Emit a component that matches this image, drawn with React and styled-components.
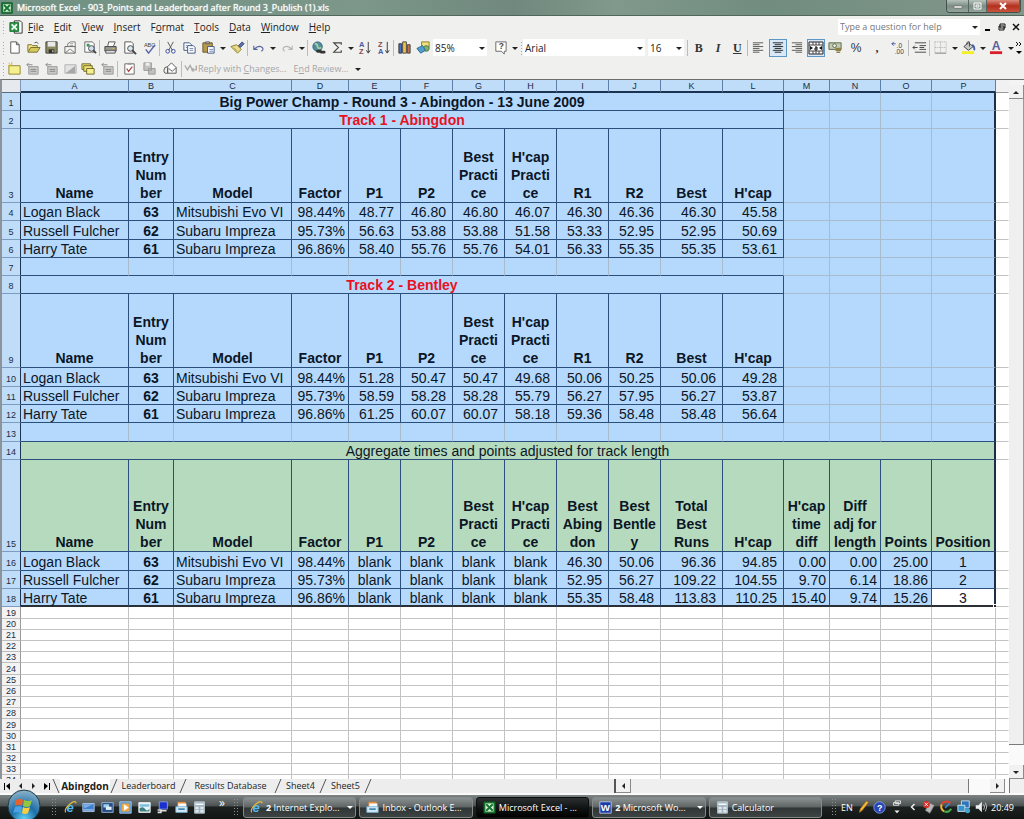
import styled, { createGlobalStyle, css } from "styled-components";

const UI_FONT = "'Open Sans', 'Noto Sans', sans-serif";
const CELL_FONT = "'Liberation Sans', Arial, sans-serif";

const BLUE = "#b5d9fd";
const GREEN = "#b6dabd";
const LINE = "#2b4f7c";
const SOFT = "#a9bccf";
const GRID = "#c3c3c3";

const columns = [
    { letter: "A", width: 108, align: "left" },
    { letter: "B", width: 45, align: "center" },
    { letter: "C", width: 118, align: "left" },
    { letter: "D", width: 57, align: "right", pad: 3 },
    { letter: "E", width: 52, align: "right", pad: 6 },
    { letter: "F", width: 52, align: "right", pad: 6 },
    { letter: "G", width: 52, align: "right", pad: 6 },
    { letter: "H", width: 52, align: "right", pad: 6 },
    { letter: "I", width: 52, align: "right", pad: 6 },
    { letter: "J", width: 52, align: "right", pad: 6 },
    { letter: "K", width: 62, align: "right", pad: 6 },
    { letter: "L", width: 61, align: "right", pad: 6 },
    { letter: "M", width: 46, align: "right", pad: 3 },
    { letter: "N", width: 51, align: "right", pad: 3 },
    { letter: "O", width: 51, align: "right", pad: 3 },
    { letter: "P", width: 64, align: "center" },
];

const trackHead = ["Name", "Entry\nNum\nber", "Model", "Factor", "P1", "P2", "Best\nPracti\nce", "H'cap\nPracti\nce", "R1", "R2", "Best", "H'cap"];
const totalHead = ["Name", "Entry\nNum\nber", "Model", "Factor", "P1", "P2", "Best\nPracti\nce", "H'cap\nPracti\nce", "Best\nAbing\ndon", "Best\nBentle\ny", "Total\nBest\nRuns", "H'cap", "H'cap\ntime\ndiff", "Diff\nadj for\nlength", "Points", "Position"];

const rows = [
    { type: "banner", height: 18, text: "Big Power Champ - Round 3 - Abingdon - 13 June 2009", bold: true },
    { type: "banner", height: 18, text: "Track 1 - Abingdon", bold: true, color: "#e8121f" },
    { type: "head", height: 74, cells: trackHead },
    { type: "data", height: 18, cells: ["Logan Black", "63", "Mitsubishi Evo VI", "98.44%", "48.77", "46.80", "46.80", "46.07", "46.30", "46.36", "46.30", "45.58"] },
    { type: "data", height: 19, cells: ["Russell Fulcher", "62", "Subaru Impreza", "95.73%", "56.63", "53.88", "53.88", "51.58", "53.33", "52.95", "52.95", "50.69"] },
    { type: "data", height: 18, cells: ["Harry Tate", "61", "Subaru Impreza", "96.86%", "58.40", "55.76", "55.76", "54.01", "56.33", "55.35", "55.35", "53.61"] },
    { type: "gap", height: 18, lineTo: 12 },
    { type: "banner", height: 18, text: "Track 2 - Bentley", bold: true, color: "#e8121f" },
    { type: "head", height: 74, cells: trackHead },
    { type: "data", height: 19, cells: ["Logan Black", "63", "Mitsubishi Evo VI", "98.44%", "51.28", "50.47", "50.47", "49.68", "50.06", "50.25", "50.06", "49.28"] },
    { type: "data", height: 18, cells: ["Russell Fulcher", "62", "Subaru Impreza", "95.73%", "58.59", "58.28", "58.28", "55.79", "56.27", "57.95", "56.27", "53.87"] },
    { type: "data", height: 18, cells: ["Harry Tate", "61", "Subaru Impreza", "96.86%", "61.25", "60.07", "60.07", "58.18", "59.36", "58.48", "58.48", "56.64"] },
    { type: "gap", height: 19, lineTo: 16 },
    { type: "banner", height: 18, text: "Aggregate times and points adjusted for track length", span: 16, green: true },
    { type: "head", height: 92, cells: totalHead, green: true },
    { type: "data", height: 19, cells: ["Logan Black", "63", "Mitsubishi Evo VI", "98.44%", "blank", "blank", "blank", "blank", "46.30", "50.06", "96.36", "94.85", "0.00", "0.00", "25.00", "1"] },
    { type: "data", height: 18, cells: ["Russell Fulcher", "62", "Subaru Impreza", "95.73%", "blank", "blank", "blank", "blank", "52.95", "56.27", "109.22", "104.55", "9.70", "6.14", "18.86", "2"] },
    { type: "data", height: 18, last: true, cells: ["Harry Tate", "61", "Subaru Impreza", "96.86%", "blank", "blank", "blank", "blank", "55.35", "58.48", "113.83", "110.25", "15.40", "9.74", "15.26", "3"] },
];

const emptyRows = [12, 11, 11, 11, 11, 12, 11, 11, 11, 11, 12, 11, 11, 11, 11, 11];

/* ---------- icons ---------- */

const drawings = {
    blank: <path d="M4 2h6l3 3v9H4z M10 2v3h3" fill="#fff" stroke="#555" />,
    open: <><path d="M2 12V5h4l1 1h5v2" fill="#f4e48a" stroke="#77702a" /><path d="M2 13l3-5h10l-3 5z" fill="#d8c860" stroke="#77702a" /><path d="M9 3q3-2 4 1" fill="none" stroke="#555" /></>,
    save: <><path d="M2 2h12v12H2z" fill="#8a8a5c" stroke="#444" /><path d="M4 2h8v5H4z" fill="#e9e9e9" /><path d="M5 10h6v4H5z" fill="#333" /><path d="M9 11h1v2H9z" fill="#fff" /></>,
    mail: <><path d="M5 7V4l3-2h5v6" fill="#fff" stroke="#777" /><path d="M7 4h4M7 6h4" stroke="#999" /><path d="M2 7h11v7H2z" fill="#f3f3f3" stroke="#666" /><path d="M2 14l5-4h1l5 4" fill="none" stroke="#777" /></>,
    find: <><path d="M3 2h8l2 2v9H3z" fill="#fff" stroke="#666" /><path d="M5 4h3v3H5z" fill="#3b8f50" /><circle cx="10" cy="9" r="3" fill="#cfe2f3" stroke="#444" /><path d="M12 11l3 3" stroke="#444" strokeWidth="2" /></>,
    print: <><path d="M5 7l1-5h7l-2 5" fill="#fff" stroke="#555" /><path d="M2 7h12v5H2z" fill="#9b9b90" stroke="#444" /><path d="M3 11h10v3H3z" fill="#ddd" stroke="#555" /><path d="M10 9h2" stroke="#d7c12d" /></>,
    preview: <><path d="M3 2h7l2 2v10H3z" fill="#fff" stroke="#555" /><circle cx="9" cy="9" r="3" fill="#d7e7f2" stroke="#444" /><path d="M11 11l4 4" stroke="#444" strokeWidth="2" /></>,
    spell: <><text x="2" y="7" fontSize="6" fontFamily="Liberation Sans" fill="#444">ABC</text><path d="M4 10l3 4 7-9" fill="none" stroke="#5b68a8" strokeWidth="1.6" /></>,
    cut: <><path d="M5 2l5 9M11 2L6 11" stroke="#555" fill="none" /><circle cx="5" cy="12" r="2" fill="none" stroke="#3a4fa3" /><circle cx="11" cy="12" r="2" fill="none" stroke="#3a4fa3" /></>,
    copy: <><path d="M2 3h6l2 2v6H2z" fill="#fff" stroke="#3f5585" /><path d="M6 6h6l2 2v6H6z" fill="#fff" stroke="#3f5585" /><path d="M8 9h4M8 11h4M4 6h2M4 8h2" stroke="#7183ad" /></>,
    paste: <><path d="M2 3h10v10H2z" fill="#b89a4f" stroke="#665526" /><path d="M5 2h4v2H5z" fill="#ccc" stroke="#555" /><path d="M7 7h7v7H7z" fill="#fff" stroke="#3f5585" /><path d="M9 10h4M9 12h4" stroke="#7183ad" /></>,
    brush: <><path d="M9 6l4-4 2 2-4 4z" fill="#5d6fae" stroke="#3d4775" /><path d="M1 7l6-2 5 5-4 4z" fill="#e9dc8c" stroke="#8b7a23" /><path d="M4 8l4 4" stroke="#a99a45" /></>,
    undo: <path d="M3 6v4h4M3 10q5-5 9-2 2 2-1 4" fill="none" stroke="#5a659c" strokeWidth="1.2" />,
    redo: <path d="M13 6v4H9M13 10Q8 5 4 8q-2 2 1 4" fill="none" stroke="#b5b5b5" strokeWidth="1.2" />,
    globe: <><circle cx="7" cy="7" r="5" fill="#4d8da0" stroke="#335c77" /><path d="M4 4q3 0 3 3t4 1" fill="none" stroke="#9ecf9c" strokeWidth="2" /><path d="M7 12h3M11 13h3" stroke="#333" strokeWidth="3" strokeLinecap="round" /></>,
    sum: <path d="M12 5V3H4l5 5-5 5h8v-2" fill="none" stroke="#444" strokeWidth="1.2" />,
    sortAz: <><text x="2" y="7" fontSize="8" fontWeight="bold" fontFamily="Liberation Sans" fill="#4a58a8">A</text><text x="2" y="15" fontSize="8" fontWeight="bold" fontFamily="Liberation Sans" fill="#8a4a4a">Z</text><path d="M12 2v11M10 11l2 3 2-3" fill="none" stroke="#333" /></>,
    sortZa: <><text x="2" y="7" fontSize="8" fontWeight="bold" fontFamily="Liberation Sans" fill="#8a4a4a">Z</text><text x="2" y="15" fontSize="8" fontWeight="bold" fontFamily="Liberation Sans" fill="#4a58a8">A</text><path d="M12 2v11M10 11l2 3 2-3" fill="none" stroke="#333" /></>,
    chart: <><path d="M2 4h3v10H2z" fill="#4b6fc0" stroke="#333" /><path d="M6 2h4v12H6z" fill="#efc04a" stroke="#444" /><path d="M11 5h3v9h-3z" fill="#c2704f" stroke="#444" /></>,
    draw: <><path d="M6 2h8v6H6z" fill="#f0e27a" stroke="#8a7726" /><circle cx="11" cy="9" r="3" fill="#7fb06d" stroke="#4e7a45" /><path d="M1 9l6-3 3 5-5 3z" fill="#4e9fd0" stroke="#2d678e" /></>,
    help: <><path d="M3 2h11v10h-2v3l-3-3H3z" fill="#fff" stroke="#666" /><text x="6" y="10" fontSize="9" fontWeight="bold" fontFamily="Liberation Sans" fill="#444">?</text></>,
    left: <path d="M2 3h11M2 5h7M2 7h11M2 9h7M2 11h11M2 13h7" stroke="#555" />,
    center: <path d="M3 3h11M5 5h7M3 7h11M5 9h7M3 11h11M5 13h7" stroke="#222" />,
    right: <path d="M3 3h11M7 5h7M3 7h11M7 9h7M3 11h11M7 13h7" stroke="#555" />,
    merge: <><path d="M1 2h14v12H1z" fill="#fff" stroke="#222" /><path d="M1 5h14M1 11h14M5 2v3M8 2v3M11 2v3M5 11v3M8 11v3M11 11v3" stroke="#444" fill="none" /><path d="M2 6v4l3-2zM14 6v4l-3-2z" fill="#111" /><path d="M7 7h2v3H7V8h2" fill="none" stroke="#111" /></>,
    money: <><path d="M1 3h13v7H1z" fill="#c3cbb3" stroke="#5a6847" /><circle cx="7" cy="6" r="2" fill="#eee" stroke="#5a6847" /><path d="M8 9h6M8 11h6M9 13h4" stroke="#8f8248" strokeWidth="1.6" /></>,
    decimal: <><text x="7" y="8" fontSize="7" fontFamily="Liberation Sans" fill="#444">.0</text><text x="5" y="15" fontSize="7" fontFamily="Liberation Sans" fill="#444">.00</text><path d="M2 4h4M4 2L2 4l2 2" fill="none" stroke="#4253a0" /></>,
    indent: <path d="M3 3h12M8 6h7M8 8h5M8 10h7M3 13h12M6 8H1M3 6L1 8l2 2" fill="none" stroke="#444" />,
    borders: <><path d="M2 2h12M2 8h12M2 2v11M8 2v11M14 2v11" stroke="#aaa" strokeDasharray="1 1" fill="none" /><path d="M2 14h12" stroke="#777" /></>,
    fill: <><path d="M3 7l5-4 5 4-5 4z" fill="#c8c8c8" stroke="#444" /><path d="M6 5q0-4 3-3v5" fill="none" stroke="#444" /><path d="M12 5q3 2 2 6" fill="none" stroke="#3f5fa9" strokeWidth="2" /><path d="M1 12h13v3H1z" fill="#f2ef22" /></>,
    fontColor: <><text x="3" y="11" fontSize="13" fontWeight="bold" fontFamily="Liberation Sans" fill="#5a5f9a">A</text><path d="M1 12h13v3H1z" fill="#d9202a" /></>,
    note: <><path d="M2 5h12v9H2z" fill="#f6ef8e" stroke="#8f8734" /><path d="M2 2l2 3M5 1v3M1 5h3" stroke="#dbb52a" /></>,
    noteOff: <><path d="M4 6h10v8H4z" fill="#c9c9c9" stroke="#999" /><path d="M8 4H2M4 2L2 4l2 2M6 9h6M6 11h6" fill="none" stroke="#888" /></>,
    slope: <><path d="M2 4h12v9H2z" fill="#e2e2e2" stroke="#b2b2b2" /><path d="M3 13L13 5v8z" fill="#a8a8a8" /></>,
    notes: <><path d="M1 3h9v6H1z" fill="#efe56e" stroke="#6e682c" /><path d="M3 5h9v6H3z" fill="#efe56e" stroke="#6e682c" /><path d="M6 8h8v6H6z" fill="#f6ef8e" stroke="#6e682c" /></>,
    task: <><path d="M3 3h10v11H3z" fill="#fff" stroke="#666" /><path d="M6 2h4v2H6z" fill="#999" /><path d="M5 8l2 3 4-5" fill="none" stroke="#a94f44" strokeWidth="1.4" /></>,
    saveOff: <><path d="M2 2h8v8H2zM7 8h7v6H7z" fill="#c2c2c2" stroke="#999" /><path d="M4 2h4v3H4z" fill="#eee" /></>,
    attach: <><path d="M5 6l4-4 5 5v6H5z" fill="#fff" stroke="#555" /><path d="M6 8l4 3 4-4M5 6q-4 0-4 4t4 3V8" fill="none" stroke="#555" /></>,
    reply: <path d="M1 4l3 5 3-5 2 4M14 4v5H9M11 7L9 9l2 2" fill="none" stroke="#aaa" strokeWidth="1.6" />,
    excel: <><path d="M1 1h14v14H1z" fill="#1f7d35" stroke="#0e4d1d" /><path d="M3 3h10v10H3z" fill="#d9f0dc" /><path d="M4 4l8 8M12 4l-8 8" stroke="#167531" strokeWidth="2.4" /></>,
    book: <><path d="M6 1h7l2 2v12H6z" fill="#fff" stroke="#222" /><path d="M1 3h10v10H1z" fill="#2f9b48" stroke="#14662a" /><path d="M3 5l6 6M9 5l-6 6" stroke="#fff" strokeWidth="1.8" /></>,
    ie: <><text x="3" y="13" fontSize="16" fontWeight="bold" fontStyle="italic" fontFamily="Liberation Sans" fill="#55b8ef">e</text><path d="M2 14Q0 10 7 4t8-1" fill="none" stroke="#e5bc3b" strokeWidth="1.4" /></>,
    desktop: <><path d="M1 3h14v10H1z" fill="#3f7fd0" stroke="#bcd4f0" /><path d="M2 4h12L3 9z" fill="#7db0ea" /><path d="M2 11h12" stroke="#e0e9f2" /></>,
    windows: <><path d="M1 2h14v12H1z" fill="#264c83" stroke="#a6bfe0" /><path d="M3 4h7v4H3z" fill="#9fd1ef" /><path d="M6 7h7v4H6z" fill="#e0effa" /></>,
    player: <><path d="M1 1h14v14H1z" fill="#4c93d5" stroke="#b9d8f2" /><path d="M3 3h10v10H3z" fill="#f0a63c" /><path d="M6 4l6 4-6 4z" fill="#fff" /></>,
    photo: <><path d="M1 2h14v12H1z" fill="#e4f2f8" stroke="#fff" /><path d="M2 4h12v3H2z" fill="#7cbde0" /><path d="M2 9q4-3 7 1t5-1v4H2z" fill="#3d7e7e" /></>,
    monitor: <><path d="M4 1h10v9H4z" fill="#1a2fd0" stroke="#93a9e4" /><path d="M7 12h6M2 11h4v3H2" stroke="#ddd" strokeWidth="2" fill="none" /></>,
    outlook: <><path d="M3 1h10v8H3z" fill="#e98c3b" /><path d="M4 3h10v6H4z" fill="#f9f9f9" /><path d="M1 7h14v7H1z" fill="#d2e8f5" stroke="#76b3d8" /><path d="M4 10h8" stroke="#367fae" strokeWidth="2" /></>,
    calc: <><path d="M2 1h12v14H2z" fill="#9fb2be" stroke="#c9d8e0" /><path d="M3 3h10v2H3z" fill="#f5fbff" /><path d="M3 7h4v3H3zM9 7h4v3H9zM3 11h4v3H3zM9 11h4v3H9z" fill="#dde6eb" /></>,
    word: <><path d="M1 1h14v14H1z" fill="#1c3ba4" stroke="#c5d1f2" /><text x="2" y="12" fontSize="12" fontWeight="bold" fontFamily="Liberation Sans" fill="#fff">W</text></>,
    pencil: <path d="M4 14l1-4 7-9 2 2-7 9z" fill="#f4c03c" stroke="#a9721b" />,
    about: <><circle cx="8" cy="8" r="7" fill="#2646b5" stroke="#8ea4ea" /><text x="5" y="12" fontSize="11" fontWeight="bold" fontFamily="Liberation Sans" fill="#fff">?</text></>,
    restore: <><path d="M6 1h6v3H6zM4 3h6v3H4z" fill="none" stroke="#eee" /><path d="M5 12h6l-3 3z" fill="#eee" /></>,
    usb: <><path d="M8 3l6 3-5 9-5-3z" fill="#b9b9b9" stroke="#777" /><circle cx="5" cy="5" r="4" fill="#d92d27" /><path d="M3 3l4 4M7 3L3 7" stroke="#fff" /></>,
    ring: <><path d="M13 4A6 6 0 0 0 3 5" fill="none" stroke="#d84430" strokeWidth="2.4" /><path d="M3 5a6 6 0 0 0 3 8" fill="none" stroke="#eeb62c" strokeWidth="2.4" /><path d="M6 13q5 2 8-3" fill="none" stroke="#44a845" strokeWidth="2.4" /><path d="M12 4L7 9" stroke="#3f83cf" strokeWidth="2" /></>,
    network: <><path d="M5 1h9v8H5z" fill="#2d75b8" stroke="#cfe6f7" /><path d="M1 6h8v7H1z" fill="#3791cb" stroke="#dbeefa" /><circle cx="12" cy="12" r="3" fill="#44a6cf" /></>,
    sound: <><path d="M2 6h3l4-4v12l-4-4H2z" fill="#eee" /><path d="M11 5q2 3 0 6M13 3q3 5 0 10" fill="none" stroke="#ccc" /></>,
    hide: <path d="M10 4L6 8l4 4" fill="none" stroke="#eee" strokeWidth="2" />,
};

function Icon({ name, size = 15 }) {
    return (
        <svg width={size} height={size} viewBox="0 0 16 16" aria-hidden="true">{drawings[name]}</svg>
    );
}

function Arrow({ dir = "down", color = "#222" }) {
    const paths = { down: "M0 2h6L3 5z", up: "M0 5h6L3 2z", left: "M5 0v6L2 3z", right: "M2 0v6l3-3z" };
    return (
        <svg width="6" height="6" viewBox="0 0 6 6" aria-hidden="true"><path d={paths[dir]} fill={color} /></svg>
    );
}

function Tools({ width, items }) {
    return (
        <Group $width={width}>
            {items.map((item, i) => (
                item === "v"
                    ? <Drop key={i} aria-label="More"><Arrow /></Drop>
                    : <Tool key={i} aria-label={item}><Icon name={item} /></Tool>
            ))}
        </Group>
    );
}

function Combo({ label, width, value }) {
    return (
        <ComboBox $width={width}>
            <ComboSelect aria-label={label} defaultValue={value}>
                <option>{value}</option>
            </ComboSelect>
            <Arrow />
        </ComboBox>
    );
}

function MenuName({ name, at = 0 }) {
    return (
        <MenuItem>{name.slice(0, at)}<u>{name[at]}</u>{name.slice(at + 1)}</MenuItem>
    );
}

function SheetRow({ row, number }) {
    const tone = row.green ? GREEN : BLUE;
    const rest = row.type === "banner" ? columns.slice(row.span || 12) : columns.slice((row.cells || []).length);
    return (
        <tr>
            <RowHead scope="row" $height={row.height} $selected>{number}</RowHead>
            {row.type === "banner" && (
                <Cell colSpan={row.span || 12} $bg={tone} $align="center" $bold={row.bold} $color={row.color} $edge={row.span === 16}>{row.text}</Cell>
            )}
            {row.type === "head" && row.cells.map((text, i) => (
                <Cell key={i} as="th" scope="col" $bg={tone} $align="center" $bold $edge={i === 15}>{text}</Cell>
            ))}
            {row.type === "data" && row.cells.map((text, i) => (
                <Cell
                    key={i}
                    $bg={row.last && i === 15 ? "#fff" : tone}
                    $align={text === "blank" ? "center" : columns[i].align}
                    $pad={text === "blank" ? 0 : columns[i].pad}
                    $bold={i === 1}
                    $edge={i === 15}
                    $last={row.last}
                >
                    {text}
                    {row.last && i === 15 && <Handle />}
                </Cell>
            ))}
            {row.type === "gap" && columns.map((col, i) => (
                <Cell key={col.letter} $bg={tone} $right={SOFT} $bottom={i < row.lineTo ? LINE : SOFT} $edge={i === 15} />
            ))}
            {row.type !== "gap" && rest.map((col) => (
                <Cell key={col.letter} $bg={tone} $right={SOFT} $bottom={SOFT} $edge={col.letter === "P"} />
            ))}
            <Cell $bg="#fff" $right="#fff" $bottom={GRID} />
        </tr>
    );
}

function Task({ icon, children, active, menu }) {
    return (
        <TaskButton $active={active}>
            <Icon name={icon} size={13} />
            <span>{children}</span>
            {menu && <Arrow color="#fff" />}
        </TaskButton>
    );
}

export default function App() {
    return (
        <Window>
            <GlobalStyle />
            <TitleBar>
                <Icon name="excel" size={12} />
                <Title>Microsoft Excel - 903_Points and Leaderboard after Round 3_Publish (1).xls</Title>
                <Caption>
                    <CaptionButton aria-label="Minimize" $width={22}><svg width="10" height="8"><path d="M1 4h8v2H1z" fill="#fff" stroke="#555" strokeWidth=".5" /></svg></CaptionButton>
                    <CaptionButton aria-label="Restore" $width={18}><svg width="10" height="8"><path d="M1 1h7v6H1zM3 3h3v2H3z" fill="none" stroke="#fff" /></svg></CaptionButton>
                    <CaptionButton aria-label="Close" $width={33} $close><svg width="10" height="8"><path d="M2 1l6 6M8 1L2 7" stroke="#fff" strokeWidth="2" /></svg></CaptionButton>
                </Caption>
            </TitleBar>

            <MenuBar>
                <Grip />
                <Icon name="book" size={14} />
                <MenuList>
                    <MenuName name="File" />
                    <MenuName name="Edit" />
                    <MenuName name="View" />
                    <MenuName name="Insert" />
                    <MenuName name="Format" at={1} />
                    <MenuName name="Tools" />
                    <MenuName name="Data" />
                    <MenuName name="Window" />
                    <MenuName name="Help" />
                </MenuList>
                <Ask>
                    <AskInput aria-label="Type a question for help" placeholder="Type a question for help" />
                    <Arrow />
                </Ask>
                <BookButtons>
                    <Drop aria-label="Minimize workbook"><svg width="8" height="8"><path d="M1 6h5v2H1z" /></svg></Drop>
                    <Drop aria-label="Restore workbook"><svg width="8" height="8"><path d="M2 1h5v4H2zM1 3h5v4H1z" fill="#eee" stroke="#111" /></svg></Drop>
                    <Drop aria-label="Close workbook"><svg width="8" height="8"><path d="M1 1l6 6M7 1L1 7" stroke="#111" strokeWidth="1.5" /></svg></Drop>
                </BookButtons>
            </MenuBar>

            <ToolBar>
                <Grip />
                <Tools width={94} items={["blank", "open", "save", "mail", "find"]} />
                <Rule />
                <Tools width={58} items={["print", "preview", "spell"]} />
                <Rule />
                <Tools width={86} items={["cut", "copy", "paste", "v", "brush"]} />
                <Rule />
                <Tools width={58} items={["undo", "v", "redo", "v"]} />
                <Rule />
                <Tools width={84} items={["globe", "sum", "v", "sortAz", "sortZa"]} />
                <Rule />
                <Tools width={38} items={["chart", "draw"]} />
                <Combo label="Zoom" width={54} value="85%" />
                <Tools width={30} items={["help", "v"]} />
                <Grip />
                <Combo label="Font" width={122} value="Arial" />
                <Combo label="Font size" width={36} value="16" />
                <Rule />
                <Group $width={58}>
                    <Letter aria-label="Bold"><b>B</b></Letter>
                    <Letter aria-label="Italic"><b><i>I</i></b></Letter>
                    <Letter aria-label="Underline"><b><u>U</u></b></Letter>
                </Group>
                <Rule />
                <Group $width={76}>
                    <Tool aria-label="Align left"><Icon name="left" /></Tool>
                    <Tool aria-label="Center" $on><Icon name="center" /></Tool>
                    <Tool aria-label="Align right"><Icon name="right" /></Tool>
                    <Tool aria-label="Merge and center" $on><Icon name="merge" size={16} /></Tool>
                </Group>
                <Group $width={83}>
                    <Tool aria-label="Currency"><Icon name="money" /></Tool>
                    <Letter aria-label="Percent" $sans>%</Letter>
                    <Letter aria-label="Comma style"><b>,</b></Letter>
                    <Tool aria-label="Increase decimal"><Icon name="decimal" /></Tool>
                </Group>
                <Rule />
                <Tools width={19} items={["indent"]} />
                <Rule />
                <Tools width={84} items={["borders", "v", "fill", "v", "fontColor", "v"]} />
                <Drop aria-label="Toolbar options">
                    <svg width="8" height="14"><path d="M1 1l2 2-2 2M4 1l2 2-2 2" fill="none" stroke="#111" /><path d="M1 10h6l-3 3z" /></svg>
                </Drop>
            </ToolBar>

            <ToolBar>
                <Grip />
                <Tools width={112} items={["note", "noteOff", "noteOff", "slope", "notes", "noteOff"]} />
                <Rule />
                <Tools width={62} items={["task", "saveOff", "attach"]} />
                <Rule />
                <Review disabled><Icon name="reply" size={14} />Reply with <u>C</u>hanges...</Review>
                <Review disabled>E<u>n</u>d Review...</Review>
                <Drop aria-label="Reviewing options"><Arrow /></Drop>
            </ToolBar>

            <Workbook>
                <SheetArea>
                    <Sheet>
                        <colgroup>
                            <Col $width={21} />
                            {columns.map((col) => <Col key={col.letter} $width={col.width} />)}
                            <col />
                        </colgroup>
                        <thead>
                            <tr>
                                <Corner aria-label="Select all" />
                                {columns.map((col) => <ColHead key={col.letter} scope="col">{col.letter}</ColHead>)}
                                <ColHead $plain aria-label="Q" />
                            </tr>
                        </thead>
                        <tbody>
                            {rows.map((row, i) => <SheetRow key={i} row={row} number={i + 1} />)}
                            {emptyRows.map((height, i) => (
                                <tr key={i}>
                                    <RowHead scope="row" $height={height}>{i + 19}</RowHead>
                                    {columns.map((col) => <Empty key={col.letter} />)}
                                    <Empty $open />
                                </tr>
                            ))}
                        </tbody>
                    </Sheet>
                </SheetArea>
                <VScroll>
                    <ScrollButton aria-label="Scroll up"><Arrow dir="up" /></ScrollButton>
                    <VThumb />
                    <VTrack />
                    <ScrollButton aria-label="Scroll down"><Arrow /></ScrollButton>
                </VScroll>
            </Workbook>

            <TabBar>
                <TabNav>
                    <Drop aria-label="First sheet"><svg width="7" height="7"><path d="M0 0h1v7H0zM6 0v7L2 3z" /></svg></Drop>
                    <Drop aria-label="Previous sheet"><Arrow dir="left" /></Drop>
                    <Drop aria-label="Next sheet"><Arrow dir="right" /></Drop>
                    <Drop aria-label="Last sheet"><svg width="7" height="7"><path d="M6 0h1v7H6zM1 0v7l4-4z" /></svg></Drop>
                </TabNav>
                <Slash viewBox="0 0 8 14"><path d="M1 0l6 14" /></Slash>
                <SheetTab $active $width={50}>Abingdon</SheetTab>
                <Slash viewBox="0 0 8 14"><path d="M7 0L1 14" /></Slash>
                <SheetTab $width={61}>Leaderboard</SheetTab>
                <Slash viewBox="0 0 8 14"><path d="M7 0L1 14" /></Slash>
                <SheetTab $width={87}>Results Database</SheetTab>
                <Slash viewBox="0 0 8 14"><path d="M7 0L1 14" /></Slash>
                <SheetTab $width={37}>Sheet4</SheetTab>
                <Slash viewBox="0 0 8 14"><path d="M7 0L1 14" /></Slash>
                <SheetTab $width={37}>Sheet5</SheetTab>
                <Slash viewBox="0 0 8 14"><path d="M7 0L1 14" /></Slash>
                <HScroll>
                    <ScrollButton aria-label="Scroll left"><Arrow dir="left" /></ScrollButton>
                    <HThumb />
                    <HTrack />
                    <ScrollButton aria-label="Scroll right"><Arrow dir="right" /></ScrollButton>
                    <SplitBox />
                </HScroll>
            </TabBar>

            <TaskBar>
                <Start aria-label="Start">
                    <svg width="36" height="30" viewBox="0 0 36 30">
                        <defs>
                            <radialGradient id="orb" cx=".5" cy=".9" r=".9">
                                <stop offset="0" stopColor="#5fd0f5" />
                                <stop offset=".45" stopColor="#1d6ea8" />
                                <stop offset="1" stopColor="#8fb4c9" />
                            </radialGradient>
                        </defs>
                        <circle cx="18" cy="17" r="16" fill="url(#orb)" stroke="#1f3947" />
                        <path d="M10 11q4-2 7 0l-1 6q-4-2-7 0z" fill="#e8602d" />
                        <path d="M18 11q4 2 8 0l-2 6q-3 2-7 0z" fill="#93c83e" />
                        <path d="M9 18q4-2 7 0l-1 6q-4-2-8 0z" fill="#4aa3e4" />
                        <path d="M17 18q3 2 7 0l-2 6q-3 2-6 0z" fill="#fbcf3c" />
                    </svg>
                </Start>
                <Grip $dark />
                <Quick>
                    {["ie", "desktop", "windows", "player", "photo", "monitor", "outlook", "calc"].map((name) => (
                        <Tool key={name} aria-label={name}><Icon name={name} size={13} /></Tool>
                    ))}
                </Quick>
                <Chevron aria-label="More shortcuts">»</Chevron>
                <Grip $dark />
                <TaskList>
                    <Task icon="ie" menu><b>2</b> Internet Explo...</Task>
                    <Task icon="outlook">Inbox - Outlook E...</Task>
                    <Task icon="excel" active>Microsoft Excel - ...</Task>
                    <Task icon="word" menu><b>2</b> Microsoft Wo...</Task>
                    <Task icon="calc">Calculator</Task>
                </TaskList>
                <Grip $dark />
                <Tray>
                    <span>EN</span>
                    <Icon name="pencil" size={14} />
                    <Icon name="about" size={13} />
                    <Icon name="restore" size={14} />
                    <Icon name="hide" size={12} />
                    <Icon name="usb" size={14} />
                    <Icon name="ring" size={14} />
                    <Icon name="network" size={14} />
                    <Icon name="sound" size={14} />
                    <span>20:49</span>
                </Tray>
            </TaskBar>
        </Window>
    );
}

/* ---------- styles ---------- */

const GlobalStyle = createGlobalStyle`
    * {
        box-sizing: border-box;
    }
    body {
        margin: 0;
    }
    button, input, select {
        margin: 0;
        padding: 0;
        border: none;
        background: none;
        color: inherit;
        font: inherit;
    }
    svg {
        display: block;
        flex: none;
    }
`

const Window = styled.div`
    display: flex;
    flex-direction: column;
    height: 100vh;
    min-width: 1024px;
    overflow: hidden;
    background: #f0f0ef;
    color: #222;
    font-family: ${UI_FONT};
    font-size: 10px;
`

const TitleBar = styled.header`
    display: flex;
    align-items: center;
    height: 16px;
    padding: 0 3px 0 1px;
    gap: 4px;
    color: #fff;
    background: linear-gradient(90deg, #6f9182, #7d978a 35%, #70887d 50%, #81988c 60%, #718d80 75%, #83968c);
    border-bottom: 1px solid #53665d;
`

const Title = styled.h1`
    flex: 1;
    margin: 0;
    font-size: 9px;
    font-weight: 400;
    line-height: 14px;
    text-shadow: 0 0 1px #fff;
`

const Caption = styled.div`
    display: flex;
    align-self: flex-start;
    height: 13px;
    border: 1px solid #43524b;
    border-top: none;
    border-radius: 0 0 4px 4px;
    overflow: hidden;
`

const CaptionButton = styled.button`
    display: flex;
    align-items: center;
    justify-content: center;
    width: ${props => props.$width}px;
    background: ${props => props.$close ? "linear-gradient(#d98c7d, #b3301d 50%, #c9543d)" : "linear-gradient(#b6c3bc, #7c8c84 50%, #94a59c)"};
    border-right: 1px solid #56655e;
`

const MenuBar = styled.nav`
    display: flex;
    align-items: center;
    height: 21px;
    padding: 0 4px 0 2px;
    gap: 4px;
`

const MenuList = styled.div`
    display: flex;
    flex: 1;
    gap: 10px;
    padding-left: 1px;
`

const MenuItem = styled.button`
    line-height: 14px;
`

const Ask = styled.label`
    display: flex;
    align-items: center;
    width: 142px;
    height: 16px;
    padding: 0 2px;
    background: #fff;
    font-size: 9px;
`

const AskInput = styled.input`
    flex: 1;
    min-width: 0;
    outline: none;
    &::placeholder {
        color: #777;
        opacity: 1;
    }
`

const BookButtons = styled.div`
    display: flex;
    gap: 6px;
`

const ToolBar = styled.div`
    display: flex;
    align-items: center;
    height: 21px;
    padding-left: 2px;
`

const Grip = styled.span`
    flex: none;
    width: ${props => props.$dark ? 6 : 3}px;
    height: ${props => props.$dark ? 18 : 14}px;
    margin-right: ${props => props.$dark ? 4 : 0}px;
    background: radial-gradient(circle, ${props => props.$dark ? "#8b908f" : "#aaa"} 0 1px, transparent 1px) 0 0 / 3px 3px;
`

const Rule = styled.span`
    flex: none;
    width: 1px;
    height: 16px;
    margin-right: 1px;
    background: #bcbcbc;
`

const Group = styled.div`
    display: flex;
    flex: none;
    align-items: center;
    justify-content: space-around;
    width: ${props => props.$width}px;
`

const Tool = styled.button`
    display: flex;
    align-items: center;
    justify-content: center;
    width: 18px;
    height: 18px;
    ${props => props.$on && css`
        background: #d8e8f6;
        border: 1px solid #5c96c4;
    `}
`

const Letter = styled.button`
    width: 18px;
    height: 18px;
    font-family: ${props => props.$sans ? CELL_FONT : "'Liberation Serif', serif"};
    font-size: 12px;
    line-height: 18px;
    text-align: center;
    color: #333;
`

const Drop = styled.button`
    display: flex;
    align-items: center;
    justify-content: center;
    width: 8px;
    height: 16px;
`

const ComboBox = styled.label`
    display: flex;
    flex: none;
    align-items: center;
    width: ${props => props.$width}px;
    height: 17px;
    margin-right: 3px;
    padding: 0 2px;
    background: #fff;
`

const ComboSelect = styled.select`
    flex: 1;
    min-width: 0;
    appearance: none;
    outline: none;
`

const Review = styled.button`
    display: flex;
    align-items: center;
    gap: 0;
    margin-left: 1px;
    margin-right: 6px;
    color: #a6a6a6;
    font-size: 9px;
    white-space: pre;
`

const Workbook = styled.main`
    display: flex;
    flex: 1;
    min-height: 0;
    border-top: 1px solid #6d6d6d;
    border-left: 2px solid #8e9299;
`

const SheetArea = styled.div`
    flex: 1;
    overflow: hidden;
    background: #fff;
`

const Sheet = styled.table`
    width: 100%;
    table-layout: fixed;
    border-collapse: separate;
    border-spacing: 0;
`

const Col = styled.col`
    width: ${props => props.$width}px;
    &:first-child {
        width: 19px;
    }
`

const Corner = styled.td`
    height: 13px;
    padding: 0;
    background: #e6e9ee;
    border-right: 1px solid #8096b0;
    border-bottom: 1px solid #5b6b80;
`

const ColHead = styled.th`
    height: 13px;
    padding: 0;
    font-family: ${CELL_FONT};
    font-size: 9px;
    font-weight: 400;
    line-height: 10px;
    color: #1d2c44;
    background: ${props => props.$plain ? "#f1f1f1" : "#bfddf9"};
    border-right: 1px solid ${props => props.$plain ? "#f1f1f1" : "#5d7fa8"};
    border-bottom: ${props => props.$plain ? "1px solid #999" : "2px solid #1b3352"};
`

const RowHead = styled.th`
    height: ${props => props.$height}px;
    padding: 0 0 ${props => props.$selected ? 2 : 0}px;
    font-family: ${CELL_FONT};
    font-size: 9px;
    font-weight: 400;
    line-height: 10px;
    vertical-align: bottom;
    color: #1d2c44;
    background: ${props => props.$selected ? "#bfddf9" : "#f3f3f3"};
    border-right: 1px solid ${props => props.$selected ? "#1b3352" : "#9a9a9a"};
    border-bottom: 1px solid ${props => props.$selected ? "#7d9cc0" : "#bdbdbd"};
`

const Cell = styled.td`
    position: relative;
    padding: 0 ${props => props.$pad || 0}px 0 ${props => props.$align === "left" ? 2 : 0}px;
    font-family: ${CELL_FONT};
    font-size: 14px;
    font-weight: ${props => props.$bold ? 700 : 400};
    line-height: ${props => props.scope ? 18 : props.$last ? 14 : 16}px;
    text-align: ${props => props.$align};
    vertical-align: bottom;
    white-space: pre;
    color: ${props => props.$color || "#0b1626"};
    background: ${props => props.$bg};
    border-right: ${props => props.$edge ? "2px solid #1e2f45" : `1px solid ${props.$right || LINE}`};
    border-bottom: ${props => props.$last ? "2px solid #2b2f36" : `1px solid ${props.$bottom || LINE}`};
`

const Handle = styled.span`
    position: absolute;
    right: -3px;
    bottom: -3px;
    width: 4px;
    height: 4px;
    background: #222;
    border: 1px solid #fff;
`

const Empty = styled.td`
    padding: 0;
    border-right: 1px solid ${props => props.$open ? "#fff" : GRID};
    border-bottom: 1px solid ${GRID};
`

const VScroll = styled.div`
    display: flex;
    flex-direction: column;
    width: 15px;
    padding-top: 5px;
    background: #f4f4f4;
`

const ScrollButton = styled.button`
    display: flex;
    flex: none;
    align-items: center;
    justify-content: center;
    width: 15px;
    height: 14px;
    background: #f1f1f1;
    border-right: 1px solid #8a8a8a;
    border-bottom: 1px solid #8a8a8a;
`

const VThumb = styled.div`
    flex: 33;
    background: #efefef;
    border-right: 1px solid #9a9a9a;
    border-bottom: 1px solid #7a7a7a;
`

const VTrack = styled.div`
    flex: 1;
    background: #fafafa;
`

const TabBar = styled.div`
    display: flex;
    flex: none;
    align-items: center;
    height: 16px;
    background: #ededed;
    border-bottom: 2px solid #fafafa;
`

const TabNav = styled.div`
    display: flex;
    justify-content: space-between;
    width: 50px;
    margin-right: 2px;
    padding-left: 3px;
`

const Slash = styled.svg`
    width: 8px;
    height: 14px;
    fill: none;
    stroke: #555;
`

const SheetTab = styled.button`
    width: ${props => props.$width}px;
    height: 14px;
    line-height: 14px;
    font-size: ${props => props.$active ? 10 : 9}px;
    font-weight: ${props => props.$active ? 700 : 400};
    text-align: center;
    white-space: nowrap;
    background: ${props => props.$active ? "#fff" : "transparent"};
`

const HScroll = styled.div`
    display: flex;
    flex: none;
    width: 40%;
    height: 14px;
    margin-left: auto;
    background: #fafafa;
    border-left: 2px solid #555;
`

const HThumb = styled.div`
    flex: 16;
    background: #efefef;
    border-right: 1px solid #7a7a7a;
`

const HTrack = styled.div`
    flex: 1;
`

const SplitBox = styled.div`
    width: 15px;
    margin-left: 4px;
    background: #f0f0f0;
    border-left: 1px solid #777;
`

const TaskBar = styled.footer`
    position: relative;
    display: flex;
    flex: none;
    align-items: center;
    height: 24px;
    padding-left: 51px;
    color: #fff;
    font-size: 9px;
    background: linear-gradient(#7d8483, #4b5251 45%, #1d2221 50%, #111514);
`

const Start = styled.button`
    position: absolute;
    left: 6px;
    bottom: 0;
`

const Quick = styled.div`
    display: flex;
    justify-content: space-between;
    width: 148px;
`

const Chevron = styled.button`
    width: 16px;
    margin-right: 8px;
    padding-bottom: 8px;
    font-size: 12px;
    line-height: 12px;
    text-align: right;
`

const TaskList = styled.div`
    display: flex;
    flex: 1;
    gap: 3px;
    padding-right: 9px;
`

const TaskButton = styled.button`
    display: flex;
    flex: 1 1 0;
    align-items: center;
    min-width: 0;
    height: 21px;
    gap: 3px;
    padding: 0 2px 0 6px;
    text-align: left;
    white-space: nowrap;
    background: ${props => props.$active ? "linear-gradient(#2c3030, #121515 50%, #000)" : "linear-gradient(#8b9190, #5d6463 48%, #303535 52%, #3d4242)"};
    border: 1px solid ${props => props.$active ? "#0c0e0e" : "#848a89"};
    border-radius: 3px;
    span {
        flex: 1;
    }
`

const Tray = styled.div`
    display: flex;
    align-items: center;
    justify-content: space-between;
    width: 173px;
    margin-right: 10px;
`
